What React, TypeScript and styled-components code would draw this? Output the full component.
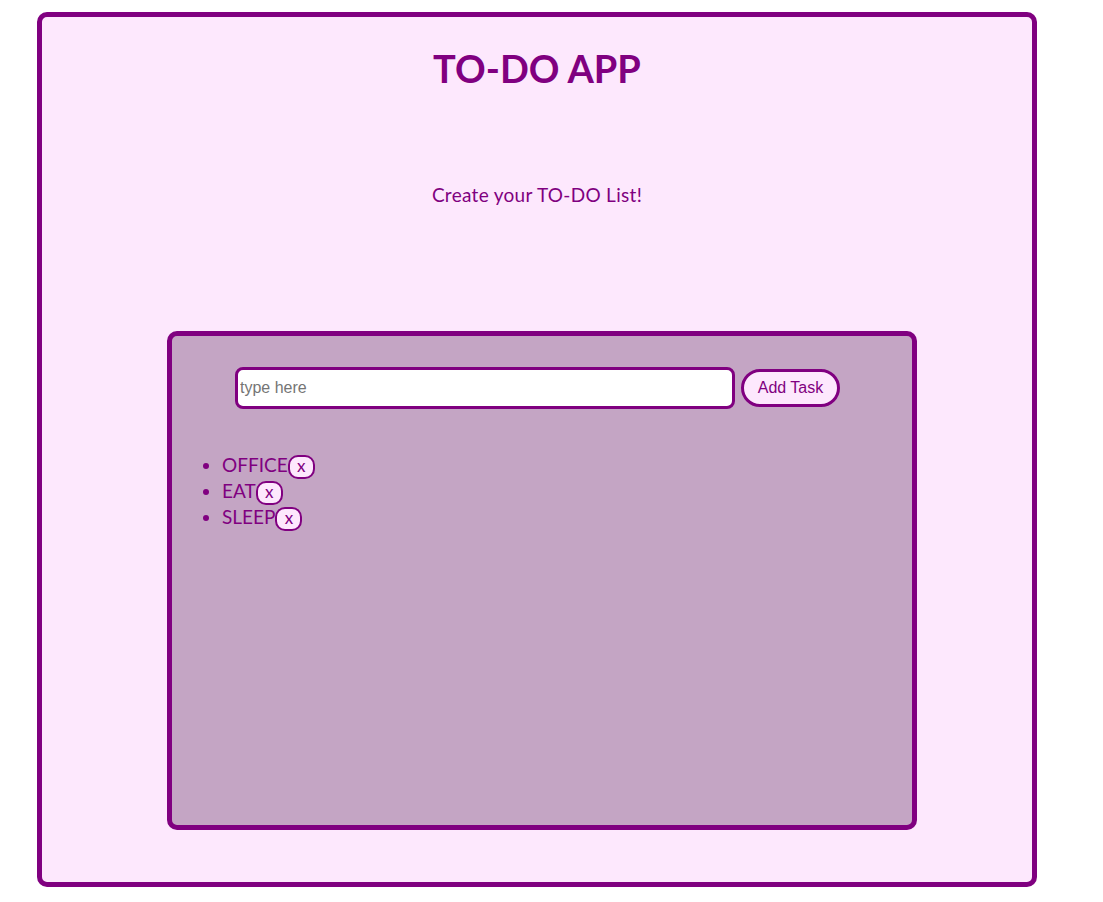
import React, { useState } from "react";
import styled, { createGlobalStyle } from "styled-components";

const Global = createGlobalStyle`
  html, body { margin: 0; padding: 0; background: #ffffff; }
  body { font-family: "Lato", "DejaVu Sans", sans-serif; }
  * { box-sizing: border-box; }
`;

const Page = styled.div`
  padding: 12px 0 0 37px;
  width: 1103px;
  height: 902px;
`;

const Frame = styled.div`
  width: 1000px;
  height: 875px;
  border: 5px solid #800080;
  border-radius: 10px;
  background: #fde8fd;
  display: flex;
  flex-direction: column;
  align-items: center;
`;

const Title = styled.h1`
  margin: 27px 0 0;
  font-family: "Lato", sans-serif;
  font-weight: 700;
  font-size: 38px;
  line-height: 48px;
  color: #800080;
`;

const Subtitle = styled.p`
  margin: 91px 0 0;
  font-size: 19px;
  line-height: 24px;
  color: #800080;
  letter-spacing: 0.3px;
`;

const Board = styled.div`
  margin: 124px 0 0 10px;
  width: 750px;
  height: 499px;
  border: 5px solid #800080;
  border-radius: 10px;
  background: #c4a5c4;
  padding: 31px 0 0 28px;
`;

const Form = styled.form`
  display: flex;
  align-items: center;
  gap: 6px;
  padding-left: 35px;
`;

const Input = styled.input`
  width: 500px;
  height: 42px;
  border: 3px solid #800080;
  border-radius: 8px;
  background: #ffffff;
  font-family: "Liberation Sans", Arial, sans-serif;
  font-size: 16px;
  padding: 0 2px;
  color: #000;
  outline: none;
  &::placeholder { color: #757575; }
`;

const AddButton = styled.button`
  width: 99px;
  height: 38px;
  border: 3px solid #800080;
  border-radius: 20px;
  background: #fde8fd;
  color: #800080;
  font-family: "Liberation Sans", Arial, sans-serif;
  font-size: 16px;
  padding: 0;
  cursor: pointer;
`;

const List = styled.ul`
  margin: 43px 0 0;
  padding-left: 22px;
  color: #800080;
  font-size: 19px;
  line-height: 25px;
`;

const Item = styled.li`
  height: 26px;
`;

const RemoveButton = styled.button`
  height: 24px;
  min-width: 27px;
  border: 2px solid #800080;
  border-radius: 10px;
  background: #fde8fd;
  color: #800080;
  font-family: "Lato", sans-serif;
  font-size: 17px;
  line-height: 18px;
  padding: 0 7px 2px;
  vertical-align: 0;
  cursor: pointer;
`;

export default function App() {
  const [tasks, setTasks] = useState<string[]>(["OFFICE", "EAT", "SLEEP"]);
  const [text, setText] = useState("");
  return (
    <>
      <Global />
      <Page>
        <Frame>
          <Title>TO-DO APP</Title>
          <Subtitle>Create your TO-DO List!</Subtitle>
          <Board>
            <Form
              onSubmit={(e) => {
                e.preventDefault();
                if (text.trim()) setTasks([...tasks, text.trim()]);
                setText("");
              }}
            >
              <Input placeholder="type here" value={text} onChange={(e) => setText(e.target.value)} />
              <AddButton type="submit">Add Task</AddButton>
            </Form>
            <List>
              {tasks.map((t, i) => (
                <Item key={i}>
                  {t}
                  <RemoveButton onClick={() => setTasks(tasks.filter((_, j) => j !== i))}>x</RemoveButton>
                </Item>
              ))}
            </List>
          </Board>
        </Frame>
      </Page>
    </>
  );
}
